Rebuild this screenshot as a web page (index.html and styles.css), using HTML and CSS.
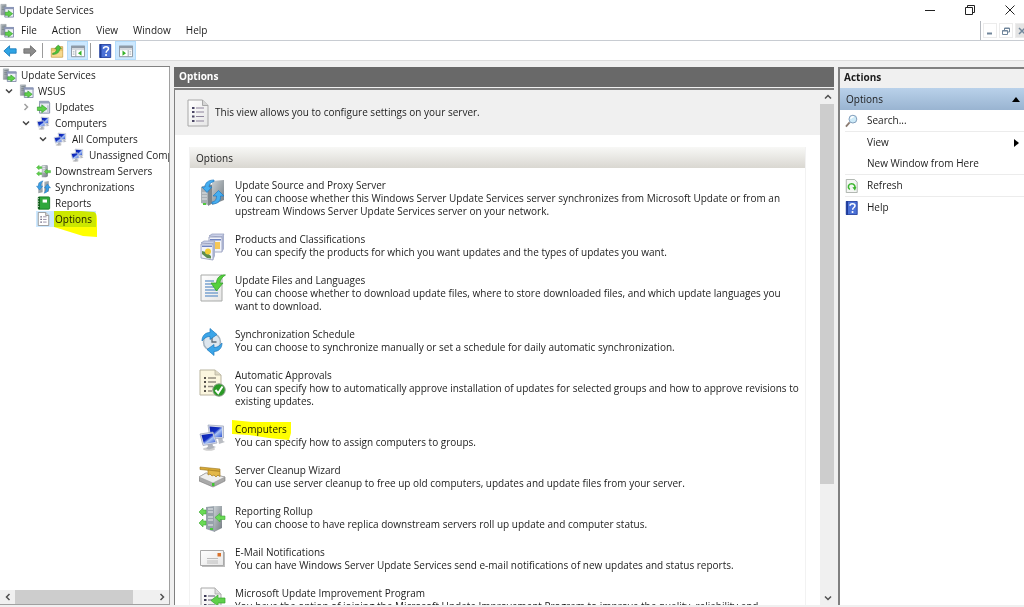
FILE: index.html
```html
<!DOCTYPE html>
<html lang="en">
<head>
<meta charset="utf-8">
<title>Update Services</title>
<link rel="stylesheet" href="styles.css">
</head>
<body>

<!-- icon set -->
<svg class="sprite" aria-hidden="true">
  <defs>
    <linearGradient id="steel" x1="0" y1="0" x2="1" y2="1">
      <stop offset="0" stop-color="#c9d0d4"/><stop offset="1" stop-color="#747c82"/>
    </linearGradient>
    <linearGradient id="screen" x1="0" y1="0" x2="1" y2="1">
      <stop offset="0" stop-color="#0a1fa8"/><stop offset=".45" stop-color="#1230c4"/><stop offset=".6" stop-color="#a9c4f5"/><stop offset="1" stop-color="#2a4fd0"/>
    </linearGradient>
    <linearGradient id="paper" x1="0" y1="0" x2="1" y2="1">
      <stop offset="0" stop-color="#fff"/><stop offset="1" stop-color="#e6e6e6"/>
    </linearGradient>
  </defs>

  <symbol id="i-services" viewBox="0 0 16 16">
    <path d="M1 1h6v12H1z" fill="url(#steel)" stroke="#8a939a" stroke-width=".6"/>
    <path d="M2 3h4M2 5h4M2 7h4" stroke="#68737b" stroke-width=".8"/>
    <path d="M5.500 4.500h10v11h-10z" fill="#eef1f8" stroke="#7c86a6"/>
    <path d="M5 4h11v2.500H5z" fill="#8c97b8"/>
    <path d="M6 10h3.500V8l5 3.700-5 3.700V13.500H6z" fill="#5fd04a" stroke="#2f9a28" stroke-width=".7"/>
  </symbol>

  <symbol id="i-updates" viewBox="0 0 16 16">
    <path d="M3.500 1.500h10.500l1 2v11.500H3.500z" fill="#e9ecf4" stroke="#7c86a0"/>
    <path d="M3 1h11l1.500 3H3z" fill="#98a2bc"/>
    <path d="M12 6h2v8h-2z" fill="#c5cbda"/>
    <path d="M1 8h5V5.500l6 4.500-6 4.500V12H1z" fill="#5fd04a" stroke="#2f9a28" stroke-width=".7"/>
  </symbol>

  <symbol id="i-computers" viewBox="0 0 28 28">
    <ellipse cx="10" cy="26" rx="6" ry="1.800" fill="#cfcfcf"/>
    <path d="M19 15l4-1 1 4 2 1-6 2z" fill="#b9bcc2"/>
    <path d="M9 2l15.500 1v12L11 16z" fill="#d7dcea" stroke="#9aa2b8" stroke-width=".7"/>
    <path d="M10.500 3.500l12.500 1V14l-11 .500z" fill="url(#screen)"/>
    <path d="M8 20l5-1 1 4 3 1-7 2.500-3-1 2-2z" fill="#aeb2ba"/>
    <path d="M1 11l13-2 4 11-14 2.500z" fill="#d7dcea" stroke="#9aa2b8" stroke-width=".7"/>
    <path d="M2.500 12l11-1.500L16.500 19 5 21z" fill="url(#screen)"/>
  </symbol>

  <symbol id="i-downstream" viewBox="0 0 16 16">
    <path d="M6 1h6l1 1v12l-2 1H6z" fill="url(#steel)"/>
    <path d="M7 3h3M7 5h3M7 7h3M7 9h3" stroke="#eef1f3"/>
    <path d="M0 4l3-2.500V3h3v2H3v1.500zM0 11l3-2.500V10h3v2H3v1.500z" fill="#5fd04a" stroke="#36a52e" stroke-width=".5"/>
    <path d="M9 8.500L12 6v1.500h4v2.500h-4v1.500z" fill="#5fd04a" stroke="#36a52e" stroke-width=".5"/>
  </symbol>

  <symbol id="i-sync" viewBox="0 0 16 16">
    <path d="M2 3l5-1v12l-5 1zM9 2l5-1v12l-5 1z" fill="url(#steel)"/>
    <path d="M7.500 1C3.500 1.500 2 4 2.200 7H0l3.500 4.500L7 7H5c0-2 .5-4 2.500-6z" fill="#3aa0e6" stroke="#1c6fb8" stroke-width=".5"/>
    <path d="M8.500 15c4-.5 5.500-3 5.300-6H16l-3.500-4.500L9 9h2c0 2-.5 4-2.500 6z" fill="#3aa0e6" stroke="#1c6fb8" stroke-width=".5"/>
  </symbol>

  <symbol id="i-reports" viewBox="0 0 16 16">
    <rect x="2" y="1" width="13" height="14" rx="1" fill="#2fa83c" stroke="#187a25"/>
    <path d="M3 1v14" stroke="#0f5d1a" stroke-width="2"/>
    <path d="M1 3h2M1 6h2M1 9h2M1 12h2" stroke="#cfd8cf"/>
    <path d="M7 4h5v3.500H7z" fill="#fff"/>
  </symbol>

  <symbol id="i-options" viewBox="0 0 22 28">
    <path d="M1 1h14.500L21 6.500V27H1z" fill="url(#paper)" stroke="#a8a8a8"/>
    <path d="M15.500 1v5.500H21" fill="#d6d6d6" stroke="#a8a8a8"/>
    <path d="M5 9h2.500M5 13h2.500M5 17.500h2.500M5 22h2.500" stroke="#4b4766" stroke-width="2"/>
    <path d="M9 9h8M9 13h8M9 17.500h8M9 22h8" stroke="#8d849c" stroke-width="1.200"/>
  </symbol>

  <symbol id="i-options-small" viewBox="0 0 15 16">
    <path d="M1.500.5h8.500l3.500 3.500v11.500h-12z" fill="#fff" stroke="#8f8f8f"/>
    <path d="M10 .5V4h3.500" fill="#ddd" stroke="#8f8f8f"/>
    <path d="M4 5.500h1.500M4 8.500h1.500M4 11.500h1.500" stroke="#4b4766" stroke-width="1.500"/>
    <path d="M7 5.500h4M7 8.500h4M7 11.500h4" stroke="#8d849c"/>
  </symbol>

  <symbol id="i-back" viewBox="0 0 16 14">
    <path d="M1 7l6.500-6v3.500H15v5H7.500V13z" fill="#2fa4e4" stroke="#1c7dbd"/>
  </symbol>
  <symbol id="i-forward" viewBox="0 0 16 14">
    <path d="M15 7L8.500 1v3.500H1v5h7.500V13z" fill="#8c8c8c" stroke="#6f6f6f"/>
  </symbol>
  <symbol id="i-up" viewBox="0 0 16 16">
    <path d="M1.500 5h5l1-2h7v12h-13z" fill="#eec66c" stroke="#c9a455"/>
    <path d="M2 8h12v6.500H2z" fill="#f6d98f"/>
    <path d="M3 10.500c3-.5 4.500-2 4.500-5H5.500L9.500 1l3.500 4.500h-2c0 4-3 6.500-8 6.500z" fill="#4cc23a" stroke="#2b8c22" stroke-width=".6"/>
  </symbol>
  <symbol id="i-tree-pane" viewBox="0 0 16 14">
    <path d="M.5 1.500h15v12H.5z" fill="#fff" stroke="#7f8a96"/>
    <path d="M0 1h16v3H0z" fill="#8f9aa6"/>
    <path d="M1 5.500h14" stroke="#c3cad1"/>
    <path d="M5.500 6v7.500M2 8h2M2 10.500h2" stroke="#8f9aa6"/>
    <path d="M12 6.500v6L8 9.500z" fill="#35b22a"/>
  </symbol>
  <symbol id="i-action-pane" viewBox="0 0 16 14">
    <path d="M.5 1.500h15v12H.5z" fill="#fff" stroke="#7f8a96"/>
    <path d="M0 1h16v3H0z" fill="#8f9aa6"/>
    <path d="M1 5.500h14" stroke="#c3cad1"/>
    <path d="M10.500 6v7.500M12 8h2M12 10.500h2" stroke="#8f9aa6"/>
    <path d="M4 6.500v6l4-3z" fill="#35b22a"/>
  </symbol>
  <symbol id="i-help" viewBox="0 0 14 16">
    <path d="M1 .5h12.500v15H1z" fill="#4a70d6" stroke="#1f3c9a"/>
    <path d="M1 0h2v16H1z" fill="#1f3c9a"/>
    <path d="M5.300 5.500c0-3 5.700-3 5.700 0 0 2-2.700 2-2.700 4.500" fill="none" stroke="#fff" stroke-width="1.700"/>
    <circle cx="8.200" cy="12.600" r="1.200" fill="#fff"/>
  </symbol>
  <symbol id="i-search" viewBox="0 0 14 14">
    <path d="M1 13l4-4.500" stroke="#8a7a70" stroke-width="2"/>
    <circle cx="8.500" cy="5" r="4.200" fill="#cdeaf8" stroke="#7b97b5"/>
    <path d="M6 4.500Q7 2 9.500 2.500" fill="none" stroke="#fff" stroke-width="1.400"/>
  </symbol>
  <symbol id="i-refresh" viewBox="0 0 14 16">
    <path d="M1 .5h9.500l3 3v12H1z" fill="#f4f6f4" stroke="#a3aaa3"/>
    <path d="M5 12C2 9.500 3.500 5.500 7 5.500s4.500 3 3.700 5" fill="none" stroke="#3bb52e" stroke-width="1.800"/>
    <path d="M8 9.500l4.500-.5-1.500 4.500z" fill="#3bb52e"/>
  </symbol>

  <symbol id="i-source" viewBox="0 0 28 28">
    <path d="M2 8l7-3v21l-7-2z" fill="#a9b0b5"/><path d="M9 5l5 1v18l-5 3z" fill="#7d858b"/>
    <path d="M13 2l12-1v20l-12 5z" fill="url(#steel)"/>
    <path d="M3 14h5M3 17h5M3 20h5" stroke="#e4e8ea"/>
    <path d="M4 24h3v2H4z" fill="#4ec83c"/>
    <path d="M15 1C9 1 6 4 6 8H3l5 5.500L13 8h-3c0-3 2-5 5-5.500z" fill="#45aef0" stroke="#1e78c2" stroke-width=".7"/>
    <path d="M13 25c7 0 9-4 8.500-8H25l-5.500-5.500L14 17h3.500c0 4-1.500 5.500-4.500 6z" fill="#45aef0" stroke="#1e78c2" stroke-width=".7"/>
  </symbol>

  <symbol id="i-products" viewBox="0 0 28 28">
    <path d="M10 3l3-2h12l-2 3z" fill="#cdd3ea" stroke="#8d96b8" stroke-width=".7"/>
    <path d="M10 4h13v15H10z" fill="#f1f3fa" stroke="#8d96b8" stroke-width=".8"/>
    <path d="M23 4l2-3v15l-2 3z" fill="#a9b1cf"/>
    <path d="M11 6h11v1.500H11z" fill="#6f83c0"/>
    <path d="M15 9h6v7h-6z" fill="#f6c758"/>
    <path d="M2 10l3-2h11l-2 3z" fill="#cdd3ea" stroke="#8d96b8" stroke-width=".7"/>
    <path d="M2 11h12v16L2 25z" fill="#f1f3fa" stroke="#8d96b8" stroke-width=".8"/>
    <path d="M14 11l2-3v15l-2 4z" fill="#a9b1cf"/>
    <path d="M3 12.500h10V14H3z" fill="#6f83c0"/>
    <path d="M3 18l4 1 5 4v2.500l-4-.5-5-4z" fill="#5d8d4f"/>
    <circle cx="9" cy="18.500" r="3" fill="#f3cf35"/>
  </symbol>

  <symbol id="i-files" viewBox="0 0 28 28">
    <path d="M2 1h21v26H2z" fill="url(#paper)" stroke="#a8aaa8"/>
    <path d="M6 7h9M6 10h7M6 13h9M6 16h13M6 19h13M6 22h13" stroke="#79a2d0" stroke-width="1.300"/>
    <path d="M26.500 1c-5-1-9 3-9 8H12l5.500 8L24 9h-3c0-3 2-6 5.500-8z" fill="#55d03c" stroke="#2f9a28" stroke-width=".7"/>
  </symbol>

  <symbol id="i-schedule" viewBox="0 0 28 28">
    <circle cx="13" cy="14" r="8.500" fill="#dde6ee" stroke="#a6b3be" stroke-width="1.500"/>
    <path d="M13 9v5h4.500" fill="none" stroke="#5d6c78" stroke-width="1.300"/>
    <path d="M3 13c0-6 4-8.500 8-8.500V0.500l7 6-7 5V8.500c-3 0-5 1-8 4.500z" fill="#3ba5e8" stroke="#1d78bd" stroke-width=".7"/>
    <path d="M23 15c0 6-4 8.500-8 8.500v4l-7-6 7-5v3c3 0 5-1 8-4.500z" fill="#3ba5e8" stroke="#1d78bd" stroke-width=".7"/>
  </symbol>

  <symbol id="i-approvals" viewBox="0 0 28 28">
    <path d="M1 1h15l6 5v20H1z" fill="#fbf6df" stroke="#b9b49f"/>
    <path d="M16 1v5h6" fill="#ddd8c4" stroke="#b9b49f" stroke-width=".8"/>
    <path d="M5 9h2M5 13h2M5 17.500h2M5 22h2" stroke="#55504a" stroke-width="2"/>
    <path d="M9 9h8M9 13h8M9 17.500h5M9 22h4" stroke="#948d80" stroke-width="1.300"/>
    <circle cx="20" cy="21" r="6.200" fill="#2a9a25" stroke="#8b9a8a"/>
    <path d="M16.500 21l2.700 3 4.300-6.500" fill="none" stroke="#fff" stroke-width="2"/>
  </symbol>

  <symbol id="i-cleanup" viewBox="0 0 28 28">
    <path d="M0 13l7-4 19 4v4l-12 6-14-6z" fill="#a9a9a9" stroke="#777" stroke-width=".6"/>
    <path d="M0 13l7-4 19 4-12 6z" fill="#efefef" stroke="#999" stroke-width=".6"/>
    <path d="M13 19h2.500v3H13z" fill="#3fc433"/>
    <path d="M1 3l20 2v2.500L1 5.500z" fill="#d7a935" stroke="#9b741c" stroke-width=".6"/>
    <path d="M9 6l12 1.500v5L19 11l-2 2-2-2-2 1-2-2-2 1z" fill="#e3b84a" stroke="#a67d20" stroke-width=".7"/>
  </symbol>

  <symbol id="i-rollup" viewBox="0 0 28 28">
    <path d="M7 2l9-1v26l-9-3z" fill="#98a2ab"/><path d="M15 1h8v22l-8 4z" fill="url(#steel)"/>
    <path d="M9 4h5M9 7h5M9 12h5M9 15h5M9 20h5" stroke="#edf0f2" stroke-width="1.200"/>
    <path d="M11 23h3v2h-3z" fill="#48c93a"/>
    <path d="M0 7l4-4v2h3v4H4v2zM0 18l4-4v2h3v4H4v2z" fill="#6ada55" stroke="#3ba733" stroke-width=".6"/>
    <path d="M16 12.500l5-4V11h5v3.500h-5v2.500z" fill="#6ada55" stroke="#3ba733" stroke-width=".6"/>
  </symbol>

  <symbol id="i-mail" viewBox="0 0 28 28">
    <path d="M3 6h23v15H3z" fill="#bdbdbd"/>
    <path d="M1.500 4.500h23v15h-23z" fill="url(#paper)" stroke="#a9a9a9"/>
    <path d="M18.500 7h3.500v3.500h-3.500z" fill="#d9722c"/>
    <path d="M8 12.500h11M8 15h11M8 17h11" stroke="#bcbcbc"/>
  </symbol>

  <symbol id="i-program" viewBox="0 0 28 28">
    <path d="M2 1h14l6 6v20H2z" fill="url(#paper)" stroke="#a8a8a8"/>
    <path d="M16 1v6h6" fill="#dcdcdc" stroke="#a8a8a8" stroke-width=".8"/>
    <path d="M5 9h2.500M5 13h2.500M5 18h2.500" stroke="#3c3a55" stroke-width="2.200"/>
    <path d="M9 9h7M9 13h5M9 18h7" stroke="#8f8a9c" stroke-width="1.300"/>
    <path d="M12 13.500L19 8v3h7v5h-7v3z" fill="#5fd04a" stroke="#36a52e" stroke-width=".7"/>
  </symbol>

  <symbol id="i-chevron" viewBox="0 0 8 8">
    <path d="M1 2.500l3 3 3-3" fill="none" stroke="currentColor" stroke-width="1.500"/>
  </symbol>
</svg>

<header class="titlebar">
  <svg class="app-icon"><use href="#i-services"/></svg>
  <h1 class="title">Update Services</h1>
  <div class="window-controls">
    <button aria-label="Minimize"><svg viewBox="0 0 10 10"><path d="M0 5.500h10"/></svg></button>
    <button aria-label="Restore"><svg viewBox="0 0 10 10"><path d="M.5 2.500h7v7h-7zM2.500 2.500v-2h7v7h-2"/></svg></button>
    <button aria-label="Close"><svg viewBox="0 0 10 10"><path d="M.5.5l9 9M9.500.5l-9 9"/></svg></button>
  </div>
</header>

<nav class="menubar">
  <svg class="app-icon"><use href="#i-services"/></svg>
  <div class="menus">
    <button>File</button>
    <button>Action</button>
    <button>View</button>
    <button>Window</button>
    <button>Help</button>
  </div>
  <div class="child-controls">
    <button aria-label="Minimize view"><svg viewBox="0 0 8 8"><path d="M1 6.500h5" stroke-width="2"/></svg></button>
    <button aria-label="Restore view"><svg viewBox="0 0 8 8"><path d="M.5 3.500h5v4h-5zM2.500 3V1h5v4H6M.5 4h5M2.500 1.500h5"/></svg></button>
    <button class="off" aria-label="Close view"><svg viewBox="0 0 8 8"><path d="M1 1l6 6M7 1L1 7" stroke-width="1.500"/></svg></button>
  </div>
</nav>

<div class="toolbar">
  <button aria-label="Back"><svg><use href="#i-back"/></svg></button>
  <button aria-label="Forward"><svg><use href="#i-forward"/></svg></button>
  <span class="sep"></span>
  <button aria-label="Up one level"><svg><use href="#i-up"/></svg></button>
  <button class="on" aria-label="Show or hide console tree"><svg><use href="#i-tree-pane"/></svg></button>
  <span class="sep"></span>
  <button aria-label="Help"><svg><use href="#i-help"/></svg></button>
  <button class="on" aria-label="Show or hide action pane"><svg><use href="#i-action-pane"/></svg></button>
</div>

<main class="panes">
  <section class="tree-pane">
    <ul class="tree">
      <li>
        <div class="node"><svg><use href="#i-services"/></svg><span>Update Services</span></div>
        <ul>
          <li>
            <div class="node"><button class="twist" aria-label="Collapse WSUS"><svg><use href="#i-chevron"/></svg></button><svg><use href="#i-services"/></svg><span>WSUS</span></div>
            <ul class="nested">
              <li><div class="node"><button class="twist closed" aria-label="Expand Updates"><svg><use href="#i-chevron"/></svg></button><svg><use href="#i-updates"/></svg><span>Updates</span></div></li>
              <li>
                <div class="node"><button class="twist" aria-label="Collapse Computers"><svg><use href="#i-chevron"/></svg></button><svg><use href="#i-computers"/></svg><span>Computers</span></div>
                <ul class="nested">
                  <li>
                    <div class="node"><button class="twist" aria-label="Collapse All Computers"><svg><use href="#i-chevron"/></svg></button><svg><use href="#i-computers"/></svg><span>All Computers</span></div>
                    <ul class="nested">
                      <li><div class="node leaf"><svg><use href="#i-computers"/></svg><span>Unassigned Computers</span></div></li>
                    </ul>
                  </li>
                </ul>
              </li>
              <li><div class="node leaf"><svg><use href="#i-downstream"/></svg><span>Downstream Servers</span></div></li>
              <li><div class="node leaf"><svg><use href="#i-sync"/></svg><span>Synchronizations</span></div></li>
              <li><div class="node leaf"><svg><use href="#i-reports"/></svg><span>Reports</span></div></li>
              <li>
                <div class="node leaf"><div class="selected"><svg><use href="#i-options-small"/></svg><span class="marked">Options<svg class="marker tree-marker" viewBox="0 0 44 28" preserveAspectRatio="none"><path d="M0 1h27l13 1q3 1 3 7v18l-14-1-29-9z"/></svg></span></div></div>
              </li>
            </ul>
          </li>
        </ul>
      </li>
    </ul>
    <div class="hscroll">
      <button class="left" aria-label="Scroll left"><svg><use href="#i-chevron"/></svg></button>
      <div class="track"><div class="thumb"></div></div>
      <button class="right" aria-label="Scroll right"><svg><use href="#i-chevron"/></svg></button>
    </div>
  </section>

  <section class="center-pane">
    <h2 class="pane-title">Options</h2>
    <div class="view">
      <div class="content">
        <div class="intro">
          <svg><use href="#i-options"/></svg>
          <p>This view allows you to configure settings on your server.</p>
        </div>
        <div class="card">
          <h3>Options</h3>
          <ul class="options">
            <li><svg><use href="#i-source"/></svg><div><a href="#">Update Source and Proxy Server</a><p>You can choose whether this Windows Server Update Services server synchronizes from Microsoft Update or from an upstream Windows Server Update Services server on your network.</p></div></li>
            <li><svg><use href="#i-products"/></svg><div><a href="#">Products and Classifications</a><p>You can specify the products for which you want updates and the types of updates you want.</p></div></li>
            <li><svg><use href="#i-files"/></svg><div><a href="#">Update Files and Languages</a><p>You can choose whether to download update files, where to store downloaded files, and which update languages you want to download.</p></div></li>
            <li><svg><use href="#i-schedule"/></svg><div><a href="#">Synchronization Schedule</a><p>You can choose to synchronize manually or set a schedule for daily automatic synchronization.</p></div></li>
            <li><svg><use href="#i-approvals"/></svg><div><a href="#">Automatic Approvals</a><p>You can specify how to automatically approve installation of updates for selected groups and how to approve revisions to existing updates.</p></div></li>
            <li><svg><use href="#i-computers"/></svg><div><a href="#" class="marked">Computers<svg class="marker list-marker" viewBox="0 0 60 20" preserveAspectRatio="none"><path d="M1 0l20 2h39v11l-2 7-20-2-20-3-17-1z"/></svg></a><p>You can specify how to assign computers to groups.</p></div></li>
            <li><svg><use href="#i-cleanup"/></svg><div><a href="#">Server Cleanup Wizard</a><p>You can use server cleanup to free up old computers, updates and update files from your server.</p></div></li>
            <li><svg><use href="#i-rollup"/></svg><div><a href="#">Reporting Rollup</a><p>You can choose to have replica downstream servers roll up update and computer status.</p></div></li>
            <li><svg><use href="#i-mail"/></svg><div><a href="#">E-Mail Notifications</a><p>You can have Windows Server Update Services send e-mail notifications of new updates and status reports.</p></div></li>
            <li><svg><use href="#i-program"/></svg><div><a href="#">Microsoft Update Improvement Program</a><p>You have the option of joining the Microsoft Update Improvement Program to improve the quality, reliability and</p></div></li>
          </ul>
        </div>
      </div>
      <div class="vscroll">
        <button class="up" aria-label="Scroll up"><svg><use href="#i-chevron"/></svg></button>
        <div class="track"><div class="thumb"></div></div>
        <button aria-label="Scroll down"><svg><use href="#i-chevron"/></svg></button>
      </div>
    </div>
  </section>

  <aside class="actions-pane">
    <h2>Actions</h2>
    <button class="group">Options<svg viewBox="0 0 8 5"><path d="M0 5l4-5 4 5z"/></svg></button>
    <ul class="actions">
      <li class="line"><button><svg class="icon"><use href="#i-search"/></svg>Search...</button></li>
      <li><button class="plain">View<svg class="more" viewBox="0 0 5 8"><path d="M0 0l5 4-5 4z"/></svg></button></li>
      <li class="line"><button class="plain">New Window from Here</button></li>
      <li class="line"><button><svg class="icon"><use href="#i-refresh"/></svg>Refresh</button></li>
      <li><button><svg class="icon"><use href="#i-help"/></svg>Help</button></li>
    </ul>
  </aside>
</main>

</body>
</html>
```
FILE: styles.css
```css
* {
  box-sizing: border-box;
}

body {
  margin: 0;
  height: 100vh;
  display: flex;
  flex-direction: column;
  overflow: hidden;
  background: #f0f0f0;
  color: #1c1c1c;
  font-family: "Open Sans", "Noto Sans", sans-serif;
  font-size: 10px;
  line-height: 13px;
}

h1, h2, h3, p, ul {
  margin: 0;
  padding: 0;
  font-size: 10px;
  font-weight: normal;
}

ul {
  list-style: none;
}

button {
  padding: 0;
  border: 0;
  background: none;
  color: inherit;
  font: inherit;
}

svg {
  display: block;
  flex: none;
}

.sprite {
  position: absolute;
  width: 0;
  height: 0;
}

.app-icon {
  width: 14px;
  height: 15px;
}

/* title bar */
.titlebar {
  display: flex;
  align-items: center;
  flex: none;
  height: 21px;
  background: #fff;
}

.title {
  flex: 1;
  margin-left: 5px;
}

.window-controls {
  display: flex;
  align-self: flex-start;
  height: 19px;
  margin-right: -6px;
}

.window-controls button {
  display: flex;
  align-items: center;
  justify-content: center;
  width: 40px;
}

.window-controls svg {
  width: 10px;
  height: 10px;
  fill: none;
  stroke: #222;
}

/* menu bar */
.menubar {
  display: flex;
  align-items: center;
  flex: none;
  height: 20px;
  background: #fff;
  border-bottom: 1px solid #c8ccd2;
}

.menus {
  display: flex;
  flex: 1;
  gap: 15px;
  margin-left: 7px;
}

.child-controls {
  display: flex;
  align-items: center;
  gap: 2px;
  height: 19px;
  width: 44px;
  padding-left: 2px;
  border-left: 1px solid #b4b8be;
  overflow: hidden;
}

.child-controls button {
  display: flex;
  align-items: center;
  justify-content: center;
  flex: none;
  width: 14px;
  height: 15px;
  border: 1px solid #ececec;
}

.child-controls .off {
  background: #e4e4e4;
}

.child-controls svg {
  width: 8px;
  height: 8px;
  fill: none;
  stroke: #71869b;
}

/* toolbar */
.toolbar {
  display: flex;
  align-items: center;
  flex: none;
  height: 20px;
  background: #fff;
  border-bottom: 1px solid #dcdcdc;
}

.toolbar button {
  display: flex;
  align-items: center;
  justify-content: center;
  width: 20px;
  height: 19px;
}

.toolbar .on {
  width: 21px;
  background: #cce8ff;
  border: 1px solid #b3dcfb;
}

.toolbar svg {
  width: 14px;
  height: 14px;
}

.sep {
  width: 1px;
  height: 15px;
  margin: 0 4px 0 2px;
  background: #9b9b9b;
}

/* three panes */
.panes {
  flex: 1;
  display: grid;
  grid-template-columns: 170px 1fr 186px;
  gap: 4px;
  min-height: 0;
  padding: 6px 0 2px;
}

.tree-pane {
  display: flex;
  flex-direction: column;
  min-width: 0;
  background: #fff;
  border-right: 1px solid #a0a0a0;
  border-bottom: 1px solid #a0a0a0;
  box-shadow: 0 -1px #828282;
  overflow: hidden;
}

.tree {
  flex: 1;
  overflow: hidden;
}

.nested {
  padding-left: 17px;
}

.node {
  display: flex;
  align-items: center;
  height: 16px;
  padding-left: 2px;
  white-space: nowrap;
}

.node svg {
  width: 15px;
  height: 14px;
  margin-right: 4px;
}

.node.leaf {
  padding-left: 19px;
}

.node .twist {
  width: 14px;
  margin-right: 3px;
  color: #444;
}

.node .twist svg {
  width: 8px;
  height: 8px;
  margin: 0 3px;
}

.node .closed {
  color: #a0a0a0;
}

.twist.closed svg {
  transform: rotate(-90deg);
}

.selected {
  display: flex;
  align-items: center;
  height: 16px;
  padding-right: 4px;
  background: #cce8ff;
}

/* felt-tip marks drawn over a label */
.marked {
  position: relative;
}

.marked .marker {
  position: absolute;
  margin: 0;
  fill: #ff0;
  mix-blend-mode: multiply;
}

.marked .tree-marker {
  left: -1px;
  top: -3px;
  width: 44px;
  height: 28px;
}

.marked .list-marker {
  left: -4px;
  top: -3px;
  width: 60px;
  height: 20px;
}

/* scroll bars */
.hscroll,
.vscroll {
  display: flex;
  flex: none;
  background: #f0f0f0;
  color: #505050;
}

.hscroll {
  height: 14px;
}

.vscroll {
  flex-direction: column;
  width: 14px;
}

.hscroll button,
.vscroll button {
  display: flex;
  align-items: center;
  justify-content: center;
  width: 15px;
  height: 14px;
}

.hscroll svg,
.vscroll svg {
  width: 8px;
  height: 8px;
}

.track {
  flex: 1;
}

.thumb {
  background: #cdcdcd;
}

.hscroll .thumb {
  width: 85%;
  height: 100%;
}

.vscroll .thumb {
  width: 100%;
  height: 78%;
}

.left svg {
  transform: rotate(90deg);
}

.right svg {
  transform: rotate(-90deg);
}

.up svg {
  transform: rotate(180deg);
}

/* options view */
.center-pane {
  display: flex;
  flex-direction: column;
  min-width: 0;
  min-height: 0;
}

.pane-title {
  flex: none;
  height: 20px;
  margin-bottom: 1px;
  padding: 3px 5px;
  background: #696969;
  color: #fff;
  font-weight: bold;
}

.view {
  flex: 1;
  display: flex;
  min-height: 0;
  background: #fff;
  border-top: 2px solid #808080;
  border-left: 1px solid #808080;
}

.content {
  flex: 1;
  overflow: hidden;
}

.intro {
  display: flex;
  align-items: center;
  gap: 6px;
  height: 45px;
  padding-left: 12px;
  background: #f0f0f0;
}

.intro svg {
  width: 22px;
  height: 28px;
}

.card {
  margin: 12px 14px 0;
  border: 1px solid #f2f2f2;
  border-top: 0;
}

.card h3 {
  height: 21px;
  padding: 5px 6px;
  background: linear-gradient(#f8f8f6, #d9d7d1);
}

.options {
  display: flex;
  flex-direction: column;
  gap: 15px;
  padding: 11px 4px 0 9px;
}

.options li {
  display: flex;
  gap: 8px;
}

.options li > svg {
  width: 28px;
  height: 28px;
  margin-bottom: -2px;
}

.options a {
  display: block;
  width: fit-content;
  color: inherit;
  text-decoration: none;
}

/* actions */
.actions-pane {
  display: flex;
  flex-direction: column;
  background: #fff;
  border-top: 2px solid #808080;
  border-left: 2px solid #808080;
}

.actions-pane h2 {
  height: 19px;
  padding: 2px 4px;
  background: #f0f0f0;
  font-weight: bold;
}

.group {
  display: flex;
  align-items: center;
  justify-content: space-between;
  height: 22px;
  padding: 0 4px 0 6px;
  background: linear-gradient(#b9d1ea, #99b4d1);
}

.group svg {
  width: 8px;
  height: 5px;
}

.actions {
  padding-left: 5px;
}

.actions button {
  display: flex;
  align-items: center;
  width: 100%;
  height: 21px;
}

.actions .line {
  border-bottom: 1px solid #ececec;
}

.actions .icon {
  width: 13px;
  height: 14px;
  margin-right: 9px;
}

.actions .plain {
  padding-left: 22px;
}

.more {
  width: 5px;
  height: 8px;
  margin-left: auto;
  margin-right: 5px;
}
```
